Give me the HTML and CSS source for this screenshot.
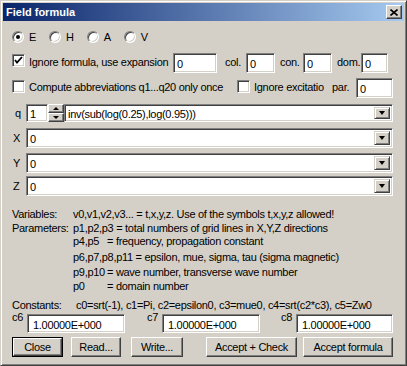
FILE: index.html
```html
<!DOCTYPE html>
<html lang="en">
<head>
<meta charset="UTF-8" />
<title>Field formula</title>
<link rel="stylesheet" href="styles.css">
</head>
<body>
<div class="window">
      <div class="titlebar">
            <span class="title">Field formula</span>
            <span class="close">
                  <svg width="8" height="7" viewBox="0 0 8 7"><path d="M0.5 0.5 L7.5 6.5 M7.5 0.5 L0.5 6.5" stroke="#000" stroke-width="1.6"/></svg>
            </span>
      </div>
      <div class="content">
            <div class="row radios">
                  <label class="opt"><span class="radio checked"></span>E</label>
                  <label class="opt"><span class="radio"></span>H</label>
                  <label class="opt"><span class="radio"></span>A</label>
                  <label class="opt"><span class="radio"></span>V</label>
            </div>

            <div class="row line1">
                  <span class="check checked">
                        <svg width="9" height="9" viewBox="0 0 9 9"><path d="M1 4 L3 6.5 L8 1" fill="none" stroke="#000" stroke-width="1.8"/></svg>
                  </span>
                  <span class="lbl w-ignore">Ignore formula, use expansion</span>
                  <span class="field w44">0</span>
                  <span class="lbl w-col">col.</span>
                  <span class="field w29">0</span>
                  <span class="lbl w-con">con.</span>
                  <span class="field w29">0</span>
                  <span class="lbl w-dom">dom.</span>
                  <span class="field w27">0</span>
            </div>

            <div class="row line2">
                  <span class="check"></span>
                  <span class="lbl w-compute">Compute abbreviations q1...q20 only once</span>
                  <span class="check"></span>
                  <span class="lbl w-excit">Ignore excitatio</span>
                  <span class="lbl w-par">par.</span>
                  <span class="field w37">0</span>
            </div>

            <div class="row qrow">
                  <span class="axis">q</span>
                  <span class="field spinval">1</span>
                  <span class="spin">
                        <span class="spinbtn"><i class="up"></i></span>
                        <span class="spinbtn"><i class="down"></i></span>
                  </span>
                  <span class="combo wq">
                        <span class="ctext">inv(sub(log(0.25),log(0.95)))</span>
                        <span class="drop"><i class="down"></i></span>
                  </span>
            </div>

            <div class="row xrow">
                  <span class="axis">X</span>
                  <span class="combo wfull"><span class="ctext">0</span><span class="drop"><i class="down"></i></span></span>
            </div>
            <div class="row yrow">
                  <span class="axis">Y</span>
                  <span class="combo wfull"><span class="ctext">0</span><span class="drop"><i class="down"></i></span></span>
            </div>
            <div class="row zrow">
                  <span class="axis">Z</span>
                  <span class="combo wfull"><span class="ctext">0</span><span class="drop"><i class="down"></i></span></span>
            </div>

            <div class="info">
                  <span>Variables:</span>
                  <span class="span2">v0,v1,v2,v3... = t,x,y,z. Use of the symbols t,x,y,z allowed!</span>
                  <span>Parameters:</span>
                  <span class="span2">p1,p2,p3 = total numbers of grid lines in X,Y,Z directions</span>
                  <span class="c2">p4,p5</span>
                  <span>= frequency, propagation constant</span>
                  <span class="span2 c2">p6,p7,p8,p11 = epsilon, mue, sigma, tau (sigma magnetic)</span>
                  <span class="c2">p9,p10</span>
                  <span>= wave number, transverse wave number</span>
                  <span class="c2">p0</span>
                  <span>= domain number</span>
                  <span>Constants:</span>
                  <span class="span2 consts">c0=srt(-1), c1=Pi, c2=epsilon0, c3=mue0, c4=srt(c2*c3), c5=Zw0</span>
            </div>

            <div class="row crow">
                  <span class="clabel c6">c6</span>
                  <span class="field num w98">1.00000E+000</span>
                  <span class="clabel c7">c7</span>
                  <span class="field num w98">1.00000E+000</span>
                  <span class="clabel c8">c8</span>
                  <span class="field num w97">1.00000E+000</span>
            </div>

            <div class="row buttons">
                  <span class="btn default b-close"><span>Close</span></span>
                  <span class="btn b-read">Read...</span>
                  <span class="btn b-write">Write...</span>
                  <span class="btn b-check">Accept + Check</span>
                  <span class="btn b-accept">Accept formula</span>
            </div>
      </div>
</div>
</body>
</html>
```

FILE: styles.css
```css
body {
      margin: 0;
      padding: 0;
      font-family: "Liberation Sans", Arial, sans-serif;
      font-size: 11px;
      color: #000;
      background: #d4d0c8;
}
.window {
      width: 407px;
      height: 366px;
      box-sizing: border-box;
      background: #d4d0c8;
      border: 1px solid;
      border-color: #d4d0c8 #404040 #404040 #d4d0c8;
      box-shadow: inset 1px 1px #fff, inset -1px -1px #808080;
      padding: 2px;
}
.titlebar {
      height: 18px;
      display: flex;
      align-items: center;
      justify-content: space-between;
      padding: 0 2px 0 3px;
      background: linear-gradient(to right, #0a246a, #a6caf0);
}
.title {
      color: #fff;
      font-weight: bold;
      font-size: 11px;
}
.close {
      width: 16px;
      height: 14px;
      box-sizing: border-box;
      display: flex;
      align-items: center;
      justify-content: center;
      background: #d4d0c8;
      border: 1px solid;
      border-color: #fff #404040 #404040 #fff;
      box-shadow: inset -1px -1px #808080;
}
.content {
      padding-left: 9px;
      letter-spacing: -0.3px;
}
.row {
      display: flex;
      white-space: nowrap;
}

/* radio buttons */
.radios {
      margin-top: 10px;
      height: 12px;
      align-items: center;
}
.opt {
      display: flex;
      align-items: center;
      margin-right: 13px;
}
.radio {
      width: 12px;
      height: 12px;
      box-sizing: border-box;
      border-radius: 50%;
      background: #fff;
      border: 1px solid;
      border-color: #808080 #fff #fff #808080;
      box-shadow: inset 1px 1px #404040, inset -1px -1px #d4d0c8;
      margin-right: 5px;
      display: flex;
      align-items: center;
      justify-content: center;
}
.radio.checked::after {
      content: "";
      width: 4px;
      height: 4px;
      border-radius: 50%;
      background: #000;
}

/* checkboxes + labels */
.check {
      width: 13px;
      height: 13px;
      flex: none;
      box-sizing: border-box;
      background: #fff;
      border: 1px solid;
      border-color: #808080 #fff #fff #808080;
      box-shadow: inset 1px 1px #404040, inset -1px -1px #d4d0c8;
      display: flex;
      align-items: center;
      justify-content: center;
}
.lbl {
      line-height: 13px;
      margin-top: 3px;
      padding-left: 4px;
      box-sizing: border-box;
      overflow: hidden;
      flex: none;
}
.line1 {
      margin-top: 10px;
      height: 20px;
}
.line1 .check {
      margin-top: 1px;
}
.line2 {
      margin-top: 5px;
      height: 20px;
}
.line2 .check {
      margin-top: 2px;
}
.w-ignore { width: 148px; }
.w-col { width: 29px; padding-left: 8px; }
.w-con { width: 28px; padding-left: 5px; }
.w-dom { width: 29px; padding-left: 5px; }
.w-compute { width: 212px; }
.w-excit { width: 82px; }
.w-par { width: 24px; padding-left: 0; }

/* sunken text fields */
.field {
      height: 100%;
      box-sizing: border-box;
      flex: none;
      background: #fff;
      border: 1px solid;
      border-color: #808080 #fff #fff #808080;
      box-shadow: inset 1px 1px #404040, inset -1px -1px #d4d0c8;
      padding: 2px 0 0 3px;
      display: flex;
      align-items: center;
}
.w44 { width: 44px; }
.w29 { width: 29px; }
.w27 { width: 27px; }
.w37 { width: 37px; }
.w98 { width: 98px; }
.w97 { width: 97px; }
.num {
      padding-left: 5px;
}

/* q / X / Y / Z rows */
.axis {
      width: 14px;
      flex: none;
      display: flex;
      align-items: center;
      padding-left: 1px;
      box-sizing: border-box;
}
.qrow {
      margin-top: 6px;
      height: 18px;
}
.qrow .axis {
      padding-left: 3px;
}
.xrow {
      margin-top: 6px;
      height: 20px;
}
.yrow {
      margin-top: 5px;
      height: 20px;
}
.zrow {
      margin-top: 3px;
      height: 20px;
}
.spinval {
      width: 22px;
}
.spin {
      width: 16px;
      display: flex;
      flex-direction: column;
}
.spinbtn {
      flex: 1;
      box-sizing: border-box;
      background: #d4d0c8;
      border: 1px solid;
      border-color: #fff #404040 #404040 #fff;
      box-shadow: inset -1px -1px #808080;
      display: flex;
      align-items: center;
      justify-content: center;
}
.up {
      width: 0;
      height: 0;
      border-left: 3px solid transparent;
      border-right: 3px solid transparent;
      border-bottom: 3px solid #000;
}
.down {
      width: 0;
      height: 0;
      border-left: 3px solid transparent;
      border-right: 3px solid transparent;
      border-top: 3px solid #000;
}
.combo {
      height: 100%;
      box-sizing: border-box;
      flex: none;
      background: #fff;
      border: 1px solid;
      border-color: #808080 #fff #fff #808080;
      box-shadow: inset 1px 1px #404040, inset -1px -1px #d4d0c8;
      padding: 2px 2px 2px 3px;
      display: flex;
}
.wq { width: 329px; }
.wfull { width: 367px; }
.ctext {
      flex: 1;
      display: flex;
      align-items: center;
      padding-top: 1px;
}
.drop {
      width: 16px;
      box-sizing: border-box;
      background: #d4d0c8;
      border: 1px solid;
      border-color: #d4d0c8 #404040 #404040 #d4d0c8;
      box-shadow: inset 1px 1px #fff, inset -1px -1px #808080;
      display: flex;
      align-items: center;
      justify-content: center;
}
.drop .down {
      border-left-width: 3.5px;
      border-right-width: 3.5px;
      border-top-width: 4px;
}

/* help text */
.info {
      margin-top: 11px;
      display: grid;
      grid-template-columns: 61px 34px 1fr;
      grid-template-rows: 14px 13px 16px 15px 14px 19px 14px;
      line-height: 14px;
      white-space: nowrap;
}
.info .span2 {
      grid-column: 2 / 4;
}
.info .c2 {
      grid-column-start: 2;
}
.info .span2.c2 {
      grid-column: 2 / 4;
}
.consts {
      padding-left: 3px;
}

/* constants */
.crow {
      margin-top: 2px;
      height: 19px;
}
.clabel {
      line-height: 12px;
      margin-top: -3px;
      box-sizing: border-box;
      flex: none;
}
.c6 { width: 15px; }
.c7 { width: 37px; text-align: right; padding-right: 4px; }
.c8 { width: 36px; text-align: right; padding-right: 4px; }

/* push buttons */
.buttons {
      margin-top: 4px;
      height: 20px;
}
.btn {
      height: 100%;
      box-sizing: border-box;
      background: #d4d0c8;
      border: 1px solid;
      border-color: #fff #404040 #404040 #fff;
      box-shadow: inset -1px -1px #808080;
      display: flex;
      align-items: center;
      justify-content: center;
      flex: none;
}
.btn.default {
      border: 1px solid #000;
      box-shadow: none;
      padding: 0;
}
.btn.default span {
      width: 100%;
      height: 100%;
      box-sizing: border-box;
      border: 1px solid;
      border-color: #fff #404040 #404040 #fff;
      box-shadow: inset -1px -1px #808080;
      display: flex;
      align-items: center;
      justify-content: center;
}
.b-close { width: 51px; }
.b-read { width: 50px; margin-left: 8px; }
.b-write { width: 52px; margin-left: 10px; }
.b-check { width: 91px; margin-left: 23px; }
.b-accept { width: 90px; margin-left: 6px; }
```
